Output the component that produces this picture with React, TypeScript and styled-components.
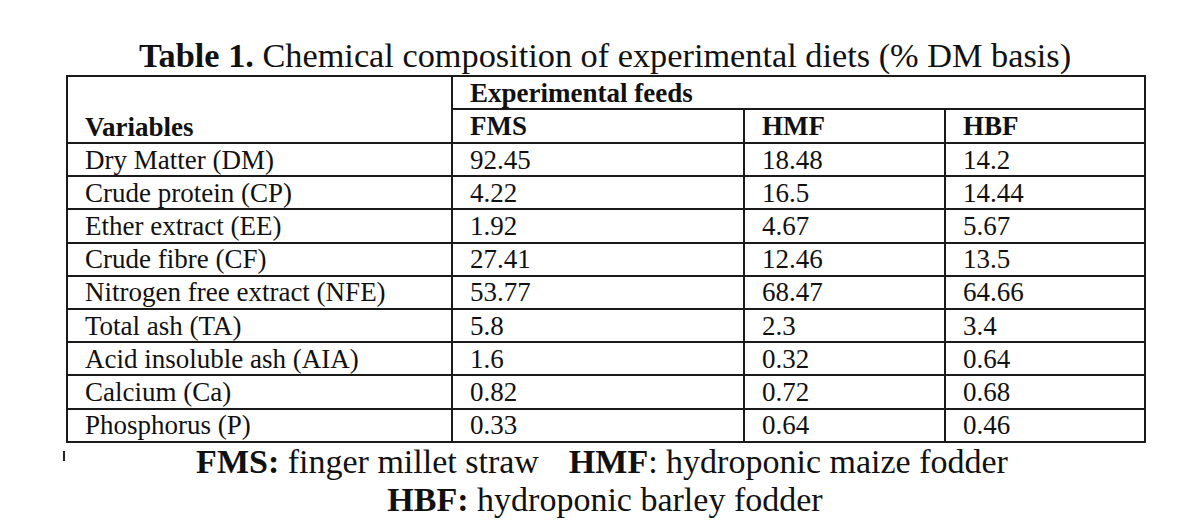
import React from "react";
import styled, { createGlobalStyle } from "styled-components";

const Global = createGlobalStyle`
  html, body { margin: 0; padding: 0; background: #ffffff; }
  body { font-family: "Liberation Serif", "Times New Roman", serif; color: #111111; }
`;

const Page = styled.div`
  width: 1200px;
  height: 524px;
  box-sizing: border-box;
  padding: 35px 0 0 66px;
  overflow: hidden;
`;

const Sheet = styled.div`
  width: 1078px;
  display: flex;
  flex-direction: column;
`;

const Title = styled.h1`
  margin: 0;
  font-size: 34.3px;
  line-height: 40px;
  font-weight: normal;
  text-align: center;
`;

const Strong = styled.b`
  font-weight: bold;
`;

const Table = styled.table`
  width: 1078px;
  table-layout: fixed;
  border-collapse: collapse;
  border: 2px solid #1a1a1a;
`;

const Cell = styled.td<{ $bold?: boolean; $h: number; $align?: string }>`
  border: 2px solid #1a1a1a;
  height: ${(p) => p.$h}px;
  padding: 0 6px 0 17px;
  box-sizing: border-box;
  font-size: 27px;
  line-height: 30px;
  font-weight: ${(p) => (p.$bold ? "bold" : "normal")};
  vertical-align: ${(p) => p.$align ?? "middle"};
  white-space: nowrap;
`;

const HeadCell = styled(Cell).attrs({ as: "th" })`
  text-align: left;
`;

const Notes = styled.div`
  display: flex;
  flex-direction: column;
  font-size: 34px;
  line-height: 38px;
`;

const NoteRow = styled.div`
  display: flex;
  align-items: flex-start;
`;

const Tick = styled.span`
  width: 2px;
  height: 10px;
  margin: 8px -5px 0 -3px;
  background: #222;
  flex: none;
`;

const NoteText = styled.div`
  flex: 1;
  text-align: center;
`;

const Term = styled.span<{ $gap?: number }>`
  margin-left: ${(p) => p.$gap ?? 0}px;
`;

const rows: [string, string, string, string][] = [
  ["Dry Matter (DM)", "92.45", "18.48", "14.2"],
  ["Crude protein (CP)", "4.22", "16.5", "14.44"],
  ["Ether extract (EE)", "1.92", "4.67", "5.67"],
  ["Crude fibre (CF)", "27.41", "12.46", "13.5"],
  ["Nitrogen free extract (NFE)", "53.77", "68.47", "64.66"],
  ["Total ash (TA)", "5.8", "2.3", "3.4"],
  ["Acid insoluble ash (AIA)", "1.6", "0.32", "0.64"],
  ["Calcium (Ca)", "0.82", "0.72", "0.68"],
  ["Phosphorus (P)", "0.33", "0.64", "0.46"],
];

export default function App() {
  return (
    <>
      <Global />
      <Page>
        <Sheet>
          <Title>
            <Strong>Table 1.</Strong> Chemical composition of experimental diets (% DM basis)
          </Title>
          <Table>
            <colgroup>
              <col style={{ width: 385 }} />
              <col style={{ width: 292 }} />
              <col style={{ width: 201 }} />
              <col style={{ width: 200 }} />
            </colgroup>
            <thead>
              <tr>
                <HeadCell rowSpan={2} $bold $h={67} $align="bottom">
                  Variables
                </HeadCell>
                <HeadCell colSpan={3} $bold $h={33}>
                  Experimental feeds
                </HeadCell>
              </tr>
              <tr>
                <HeadCell $bold $h={34}>FMS</HeadCell>
                <HeadCell $bold $h={34}>HMF</HeadCell>
                <HeadCell $bold $h={34}>HBF</HeadCell>
              </tr>
            </thead>
            <tbody>
              {rows.map((r) => (
                <tr key={r[0]}>
                  {r.map((v, i) => (
                    <Cell key={i} $h={33.2}>
                      {v}
                    </Cell>
                  ))}
                </tr>
              ))}
            </tbody>
          </Table>
          <Notes>
            <NoteRow>
              <Tick />
              <NoteText>
                <Strong>FMS:</Strong> finger millet straw
                <Term $gap={30}>
                  <Strong>HMF</Strong>: hydroponic maize fodder
                </Term>
              </NoteText>
            </NoteRow>
            <NoteRow>
              <NoteText>
                <Strong>HBF:</Strong> hydroponic barley fodder
              </NoteText>
            </NoteRow>
          </Notes>
        </Sheet>
      </Page>
    </>
  );
}
